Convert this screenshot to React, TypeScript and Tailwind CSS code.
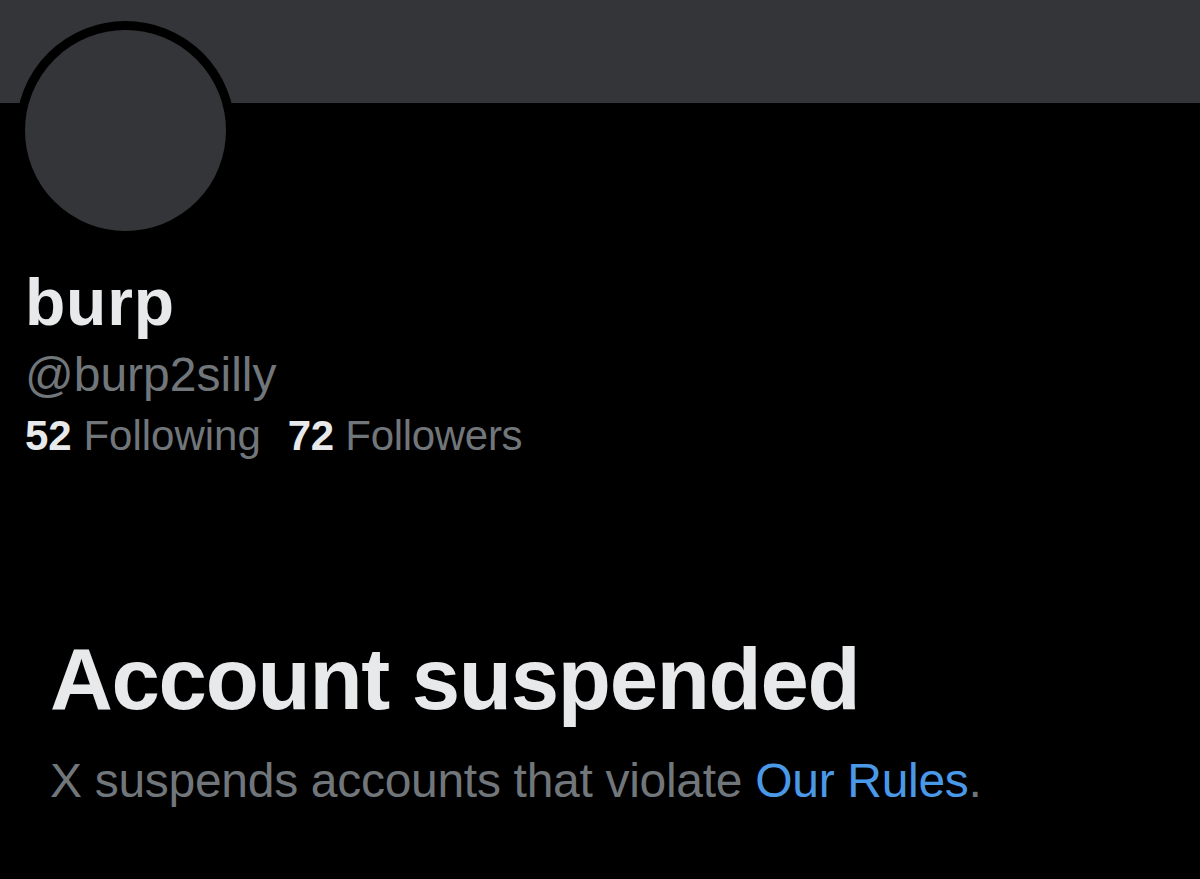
export default function App() {
  return (
    <div
      className="relative w-[1200px] h-[879px] bg-black overflow-hidden"
      style={{ fontFamily: '"Liberation Sans", Arial, sans-serif' }}
    >
      <div className="h-[103px] bg-[#343539]" />
      <div className="absolute left-[16px] top-[21px] w-[219px] h-[219px] rounded-full border-[9px] border-black bg-[#343539]" />
      <div className="pt-[166px] pl-[25px]">
        <div className="text-[66px] leading-[66px] font-bold tracking-[0.8px] text-[#e7e9ea]">burp</div>
        <div className="mt-[16px] text-[48px] leading-[48px] text-[#71767b]">@burp2silly</div>
        <div className="mt-[16px] flex text-[42px] leading-[42px]">
          <span>
            <span className="font-bold text-[#e7e9ea]">52</span>
            <span className="text-[#71767b]"> Following</span>
          </span>
          <span className="ml-[27px] tracking-[-0.3px]">
            <span className="font-bold text-[#e7e9ea]">72</span>
            <span className="text-[#71767b]"> Followers</span>
          </span>
        </div>
      </div>
      <div className="pl-[50px] mt-[178px]">
        <div className="text-[87px] leading-[87px] font-bold tracking-[-1.3px] text-[#e7e9ea]">Account suspended</div>
        <div className="mt-[35px] text-[48px] leading-[48px] tracking-[-0.3px] text-[#71767b]">
          X suspends accounts that violate <span className="text-[#4a99e9]">Our Rules</span>.
        </div>
      </div>
    </div>
  );
}
